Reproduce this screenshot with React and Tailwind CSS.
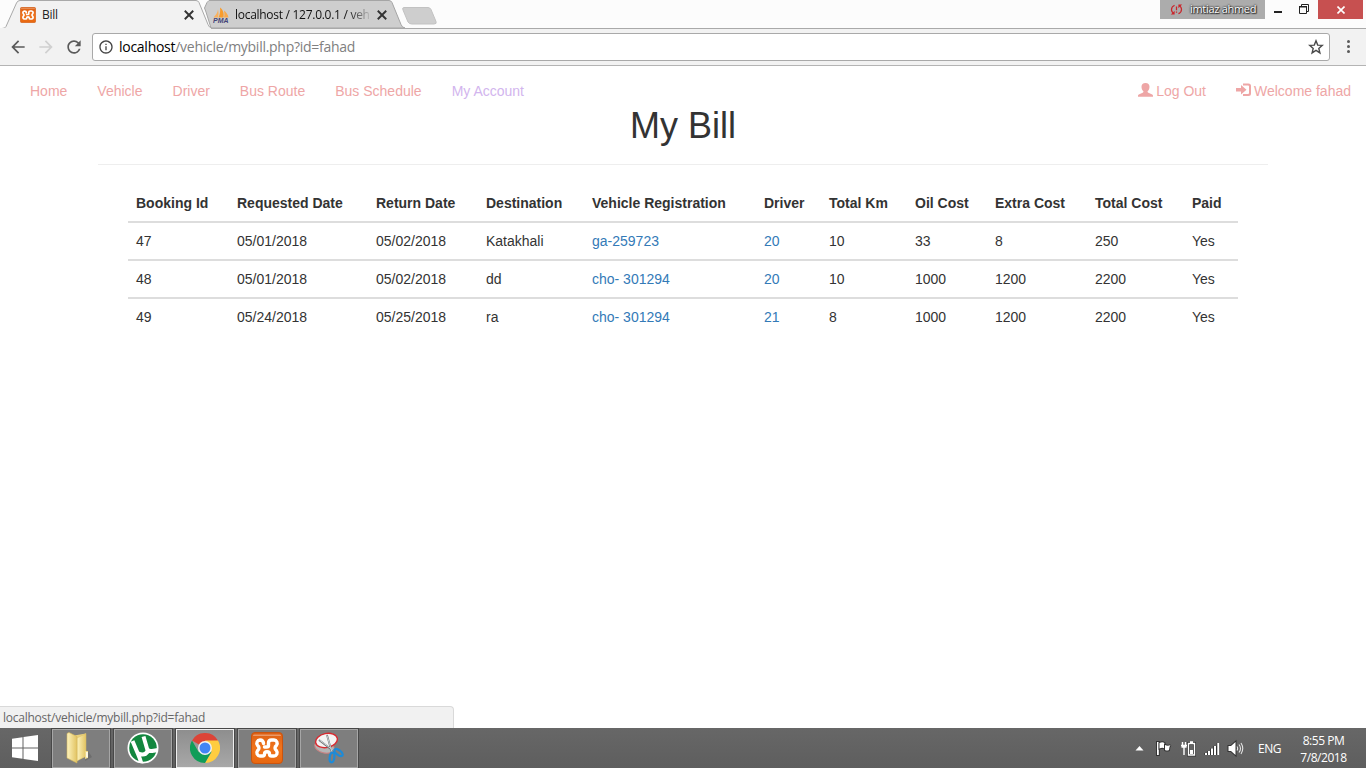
import React from "react";
import { MdSyncProblem, MdRefresh, MdArrowBack, MdArrowForward, MdInfoOutline } from "react-icons/md";

const SANS = "font-['Liberation_Sans',Arial,sans-serif]";
const UI = "font-['Open_Sans','Noto_Sans',sans-serif]";

function XamppIcon({ className }) {
  return (
    <svg className={className} viewBox="0 0 32 32">
      <defs>
        <linearGradient id="xg" x1="0" y1="0" x2="0" y2="1">
          <stop offset="0" stopColor="#dc5f14" />
          <stop offset="0.5" stopColor="#f0741c" />
          <stop offset="1" stopColor="#e8670f" />
        </linearGradient>
      </defs>
      <rect x="0.5" y="0.5" width="31" height="31" rx="3.5" fill="url(#xg)" stroke="#c9540f" />
      <path d="M3 2.5h26q1 0 1 1.500H2q0-1.500 1-1.500z" fill="#fff" opacity="0.35" />
      <path
        d="M12.500 11.500q0-3.500-3.500-3.500a3.300 3.300 0 0 0-2.500 5.300q1.500 1.200 1.500 2.700t-1.500 2.700A3.300 3.300 0 0 0 9 24h2.500q2 0 2-2 0-2.200 2.500-2.200t2.500 2.200q0 2 2 2H23a3.300 3.300 0 0 0 2.500-5.300q-1.500-1.200-1.500-2.700t1.500-2.700A3.300 3.300 0 0 0 23 8h-2.500q-3 0-3 3v2.500q0 1.500-2 1.500h-2"
        fill="none" stroke="#fff" strokeWidth="3.400" strokeLinecap="round" strokeLinejoin="round"
      />
    </svg>
  );
}

function PmaIcon() {
  return (
    <svg className="h-4 w-4 shrink-0" viewBox="0 0 16 16">
      <path d="M0.500 10.500C3 8 4.500 5.500 5 2.500c.7 2.500.7 5 0 8z" fill="#f9b05c" />
      <path d="M5.500 10.500C7 7 7.500 4 7 0.500c3.500 2.500 4 6 3.500 10z" fill="#f89c2c" />
      <path d="M11 10.500c.6-2 .5-4 0-7 2 1.500 4 4 4.500 7z" fill="#f9a94a" />
      <text x="0" y="16" fontSize="6.500" fontWeight="700" fontStyle="italic" fontFamily="Liberation Sans" fill="#444477" textLength="15.500" lengthAdjust="spacingAndGlyphs">PMA</text>
    </svg>
  );
}

function TabClose({ className }) {
  return (
    <svg className={className} viewBox="0 0 9 9">
      <path d="M.7 .7l7.600 7.600M8.300 .7L.7 8.300" stroke="#333" strokeWidth="1.700" />
    </svg>
  );
}

function TabStrip() {
  return (
    <div className="relative h-7 shrink-0 bg-[#fcfcfc]">
      <svg className="absolute left-0 top-0 h-7 w-[450px]" viewBox="0 0 450 28">
        <path d="M211 28L206 12 204.500 8 207 2.500 209 .5H389q2 0 3 2l9 22q1 3 4 3.500z" fill="#cecece" stroke="#a5a5a5" />
        <path d="M0 28.500h2q3 0 4-2L16.500 3q1-2.500 3.500-2.500H196q2 0 3 2l9 22q1 3 4 4z" fill="#f2f2f2" stroke="#a9a9a9" />
        <path d="M404 7.500h24q2 0 3 2l5 12q1 2.500-2 2.500h-22q-3 0-4-2l-5-12q-1-2.500 1-2.500z" fill="#cecece" stroke="#c2c2c2" />
      </svg>
      <div className={`relative flex h-7 items-start ${UI} text-[12px] text-[#222]`}>
        <div className="flex h-7 w-[213px] items-center pl-5 pt-[2px]">
          <XamppIcon className="h-4 w-4" />
          <span className="ml-[6px] tracking-[-0.3px]">Bill</span>
          <TabClose className="ml-auto mr-[19px] h-[10px] w-[10px]" />
        </div>
        <div className="flex h-7 w-[181px] items-center pt-[2px]">
          <PmaIcon />
          <span className="ml-[6px] w-[136px] bg-linear-to-r from-[#111] from-82% to-[#c4c4c4] bg-clip-text tracking-[-0.28px] whitespace-nowrap text-transparent">localhost / 127.0.0.1 / veh</span>
          <TabClose className="ml-[6px] h-[10px] w-[10px] shrink-0" />
        </div>
        <div className="ml-auto flex h-[19px]">
          <div className="flex h-[19px] w-[105px] items-center bg-[#acacac] pl-[9px] text-[11px] text-white">
            <MdSyncProblem className="mr-[6px] h-[15px] w-[15px] shrink-0 text-[#c9252b]" />
            <span className="-mt-px tracking-[-0.3px] whitespace-nowrap [text-shadow:0_0_2px_#222,0_0_2px_#222,1px_1px_1px_#333]">imtiaz ahmed</span>
          </div>
          <svg className="h-[19px] w-[53px]" viewBox="0 0 53 19">
            <path d="M9 11h8v2H9z" fill="#222" />
            <path d="M34.500 6.500h7v7h-7zM36.500 6v-1.500h7v7H42" fill="none" stroke="#222" />
            <path d="M34 6h8v1.500h-8z" fill="#222" />
          </svg>
          <div className="flex w-[45px] items-center justify-center bg-[#c75050]">
            <svg className="h-2 w-2" viewBox="0 0 8 8"><path d="M.5 .5l7 7M7.500 .5l-7 7" stroke="#fff" strokeWidth="1.600" /></svg>
          </div>
          <div className="w-[3px]" />
        </div>
      </div>
    </div>
  );
}

function Toolbar() {
  return (
    <div className={`relative z-10 flex h-[38px] shrink-0 items-center border-b border-[#b4b4b4] bg-[#f2f2f2] pl-2 ${UI} text-[14px]`}>
      <div className="absolute top-0 right-0 left-[211px] h-px bg-[#a9a9a9]" />
      <MdArrowBack className="h-5 w-5 text-[#5a5a5a]" />
      <MdArrowForward className="ml-2 h-5 w-5 text-[#d0d0d0]" />
      <MdRefresh className="ml-2 h-5 w-5 text-[#5a5a5a]" />
      <div className="ml-2 flex h-7 w-[1238px] items-center rounded-[3px] border border-[#a9a9a9] bg-white pr-[5px] pl-[5px]">
        <MdInfoOutline className="h-4 w-4 text-[#444]" />
        <span className="ml-[5px] tracking-[-0.27px] whitespace-nowrap text-[#808080]"><span className="text-black">localhost</span>/vehicle/mybill.php?id=fahad</span>
        <svg className="ml-auto h-4 w-4" viewBox="0 0 16 16">
          <path d="M8 1.800l1.700 4.300 4.600.3-3.500 3 1.100 4.500L8 11.400l-3.900 2.500 1.100-4.500-3.500-3 4.600-.3z" fill="none" stroke="#4a4a4a" strokeWidth="1.400" strokeLinejoin="miter" />
        </svg>
      </div>
      <div className="ml-[17px] flex flex-col gap-[2px]">
        <i className="h-[3px] w-[3px] rounded-full bg-[#5a5a5a]" />
        <i className="h-[3px] w-[3px] rounded-full bg-[#5a5a5a]" />
        <i className="h-[3px] w-[3px] rounded-full bg-[#5a5a5a]" />
      </div>
    </div>
  );
}

function SiteNav() {
  return (
    <nav className="flex h-10 items-start pt-[15px] pl-[30px] pr-[15px] text-[14px] leading-5 text-[#eea6a6]">
      <div className="flex gap-[30px]">
        <a>Home</a><a>Vehicle</a><a>Driver</a><a>Bus Route</a><a>Bus Schedule</a><a className="text-[#d2b5ee]">My Account</a>
      </div>
      <div className="ml-auto flex gap-[30px]">
        <a className="flex">
          <svg className="mt-[2px] mr-[3px] h-[14px] w-[15px]" viewBox="0 0 15 14" fill="currentColor">
            <path d="M7.500 0c2.600 0 4 1.500 4 3.800 0 1.900-.8 3.700-1.900 4.500-.2.700.1 1.100.8 1.500l3.300 1.500c.9.400 1.300.8 1.300 1.500v1H0v-1c0-.7.4-1.100 1.300-1.500l3.300-1.500c.7-.4 1-.8.8-1.500-1.100-.8-1.900-2.600-1.900-4.500C3.500 1.500 4.900 0 7.500 0z" />
          </svg>
          Log Out
        </a>
        <a className="flex">
          <svg className="mt-[2px] mr-[3px] h-[14px] w-[15px]" viewBox="0 0 15 14" fill="currentColor">
            <path d="M7 .5h5.500Q15 .5 15 3v7.500q0 2.500-2.500 2.500H7v-2h5q1 0 1-1V3.500q0-1-1-1H7z" />
            <path d="M5 2l5.500 4.700L5 11.500V8.500H0v-3.500h5z" />
          </svg>
          Welcome fahad
        </a>
      </div>
    </nav>
  );
}

const columns = [
  ["Booking Id", "w-[101px]"], ["Requested Date", "w-[139px]"], ["Return Date", "w-[110px]"],
  ["Destination", "w-[106px]"], ["Vehicle Registration", "w-[172px]"], ["Driver", "w-[65px]"],
  ["Total Km", "w-[86px]"], ["Oil Cost", "w-[80px]"], ["Extra Cost", "w-[100px]"],
  ["Total Cost", "w-[97px]"], ["Paid", "w-[54px]"],
];

const bills = [
  ["47", "05/01/2018", "05/02/2018", "Katakhali", "ga-259723", "20", "10", "33", "8", "250", "Yes"],
  ["48", "05/01/2018", "05/02/2018", "dd", "cho- 301294", "20", "10", "1000", "1200", "2200", "Yes"],
  ["49", "05/24/2018", "05/25/2018", "ra", "cho- 301294", "21", "8", "1000", "1200", "2200", "Yes"],
];

function BillTable() {
  return (
    <table className="mx-auto mt-5 w-[1110px] table-fixed border-separate border-spacing-0 text-left text-[14px] leading-5">
      <thead>
        <tr>
          {columns.map(([name, width]) => (
            <th key={name} className={`${width} p-2 font-bold whitespace-nowrap`}>{name}</th>
          ))}
        </tr>
      </thead>
      <tbody>
        {bills.map((row) => (
          <tr key={row[0]}>
            {row.map((cell, i) => (
              <td key={i} className={`border-t-2 border-[#ddd] p-2 ${i === 4 || i === 5 ? "text-[#337ab7]" : ""}`}>{cell}</td>
            ))}
          </tr>
        ))}
      </tbody>
    </table>
  );
}

function TaskButton({ active, children }) {
  return (
    <div className={`flex h-[39px] w-[58px] items-center justify-center border outline outline-[#484848] ${active ? "border-[#efefef] bg-linear-to-b from-[#8e8e8e] to-[#a8a8a8]" : "border-[#a6a6a6] bg-[#7e7e7e]"}`}>
      {children}
    </div>
  );
}

function Taskbar() {
  return (
    <div className={`flex h-10 shrink-0 items-center bg-linear-to-b from-[#676767] to-[#5e5e5e] ${UI} text-white`}>
      <div className="flex w-[52px] shrink-0 pl-3">
        <svg className="h-[26px] w-[26px]" viewBox="0 0 26 26" fill="#fff">
          <path d="M0 3.700L10.500 2.200v10.300H0zM11.500 2L26 0v12.500H11.500zM0 13.500h10.500v10.300L0 22.300zM11.500 13.500H26V26l-14.500-2z" />
        </svg>
      </div>
      <div className="flex gap-1">
        <TaskButton>
          <svg className="-ml-1 h-8 w-7" viewBox="0 0 28 32">
            <defs>
              <linearGradient id="fold" x1="0" x2="1"><stop offset="0" stopColor="#fdf3bd" /><stop offset="1" stopColor="#e2c362" /></linearGradient>
            </defs>
            <path d="M20 29l7-4-4-6z" fill="#555" opacity=".4" />
            <path d="M9 3.500l12-2v23L11 29z" fill="#ead17c" />
            <path d="M12 6l9-4.500v22.500L12 29z" fill="url(#fold)" stroke="#d8bd65" strokeWidth=".5" />
            <path d="M2 1.500L4 .5l8 4V31l-10-5z" fill="url(#fold)" stroke="#d5b75b" strokeWidth=".6" />
            <path d="M20 19h3v7l-3 1z" fill="#efd987" /><path d="M22 20v5.500" stroke="#fff" strokeWidth="1.500" />
          </svg>
        </TaskButton>
        <TaskButton>
          <svg className="h-8 w-8" viewBox="0 0 32 32">
            <defs><clipPath id="disc"><circle cx="16" cy="16" r="15.500" /></clipPath></defs>
            <circle cx="16" cy="16" r="15.500" fill="#fff" />
            <circle cx="16" cy="16" r="13.800" fill="#13873f" />
            <path d="M6 8.500l5 12 5 12M10.500 18c1.500 4.500 9 5 8.500 0L15.500 5.500M19 4l4 11q1 3 4 3h5" fill="none" stroke="#13873f" strokeWidth="0" />
            <path d="M5.500 9l5.500 13q1.800 4 3.500 10M11 21.500q7 2.500 9-1.500 1 0 0-3.500L16.500 4.500M20 17q1.500 2.500 5 2t6-1" fill="none" stroke="#fff" strokeWidth="4" clipPath="url(#disc)" />
          </svg>
        </TaskButton>
        <TaskButton active>
          <svg className="h-[30px] w-[30px]" viewBox="0 0 30 30">
            <path d="M2 7.500A15 15 0 0 1 28 7.500L15 15z" fill="#dc4437" />
            <path d="M15 7.500h13A15 15 0 0 1 15 30l6.500-11.200z" fill="#ffcd40" />
            <path d="M2 7.500A15 15 0 0 0 15 30l6.500-11.200L8.500 18.700z" fill="#109d58" />
            <circle cx="15" cy="15" r="7" fill="#f1f1f1" />
            <circle cx="15" cy="15" r="5.500" fill="#4285f4" />
          </svg>
        </TaskButton>
        <TaskButton><XamppIcon className="h-8 w-8" /></TaskButton>
        <TaskButton>
          <svg className="h-8 w-[30px]" viewBox="0 0 30 32">
            <ellipse cx="10.500" cy="15" rx="10" ry="6" fill="#b5b5b5" stroke="#c98080" transform="rotate(14 10.500 15)" />
            <ellipse cx="12.500" cy="8.500" rx="11" ry="7" fill="#f4f4f4" stroke="#d9292f" strokeWidth="1.400" transform="rotate(-12 12.500 8.500)" />
            <path d="M5 8l15 11.500M13 3l5 18" stroke="#777" strokeWidth="1.800" />
            <path d="M5.500 8l14 10.500M13 3.500l5 16.500" stroke="#c4cdd3" strokeWidth="1" />
            <ellipse cx="18" cy="25.500" rx="2.300" ry="4.800" fill="none" stroke="#1d8bd8" strokeWidth="2.200" transform="rotate(8 18 25.500)" />
            <ellipse cx="24.500" cy="20.500" rx="2.300" ry="4.800" fill="none" stroke="#1d8bd8" strokeWidth="2.200" transform="rotate(-52 24.500 20.500)" />
          </svg>
        </TaskButton>
      </div>
      <svg className="ml-auto h-[18px] w-[110px]" viewBox="0 0 110 18">
        <path d="M.5 11.500h8L4.500 7z" fill="#fff" />
        <g stroke="#333" strokeWidth="2" paintOrder="stroke" fill="#fff">
          <path d="M22 3h1.800v13H22z" />
          <path d="M24.500 4q3-1.500 5 0v5.500q-2-1.500-5 0z" /><path d="M30 6q3 1.500 5.500 0-1.500 2-1.500 5-2 1-4 0z" />
        </g>
        <path d="M53.500 4.500h6V16h-6z" fill="none" stroke="#333" strokeWidth="3" />
        <path d="M53.500 4.500h6V16h-6zM55 3h3M47.500 3v3M50.500 3v3M46 6.500h6M46.500 8h5M49 8v8" fill="none" stroke="#fff" strokeWidth="1.400" />
        <path d="M55 11h3v4h-3z" fill="#fff" />
        <path d="M71 14v2M74 12v4M77 9.500V16M80 7v9M83.300 4v12" stroke="#333" strokeWidth="3.500" />
        <path d="M71 14v2M74 12v4M77 9.500V16M80 7v9M83.300 4v12" stroke="#fff" strokeWidth="2" />
        <path d="M93.500 7h2.500L100.500 3v13l-4.500-4h-2.500z" fill="#fff" stroke="#333" strokeWidth="2" paintOrder="stroke" />
        <path d="M102 7.500q1.300 2 0 4M104 5.500q3 4 0 8M106 4q3.500 5.500 0 11" fill="none" stroke="#e4e4e4" strokeWidth="1.100" />
      </svg>
      <span className="ml-[13px] w-[24px] pt-px text-[12px] tracking-[-0.5px] whitespace-nowrap">ENG</span>
      <div className="mr-[18px] ml-[17px] flex w-[49px] flex-col items-center pt-px text-[12px] leading-[17px] tracking-[-0.45px] whitespace-nowrap">
        <span>8:55 PM</span>
        <span>7/8/2018</span>
      </div>
    </div>
  );
}

export default function App() {
  return (
    <div className="flex h-[768px] w-[1366px] flex-col overflow-hidden bg-white">
      <TabStrip />
      <Toolbar />
      <main className={`relative flex-1 text-[#333] ${SANS}`}>
        <SiteNav />
        <h1 className="text-center text-[36px] leading-10">My Bill</h1>
        <hr className="mx-auto mt-[18px] w-[1170px] border-[#eee]" />
        <BillTable />
        <div className={`absolute bottom-0 left-0 flex h-[22px] w-[454px] items-center rounded-tr-[4px] border-t border-r border-[#d9d9d9] bg-[#f1f1f1] pt-px pl-[3px] ${UI} text-[12px] tracking-[-0.24px] text-[#666]`}>
          localhost/vehicle/mybill.php?id=fahad
        </div>
      </main>
      <Taskbar />
    </div>
  );
}
